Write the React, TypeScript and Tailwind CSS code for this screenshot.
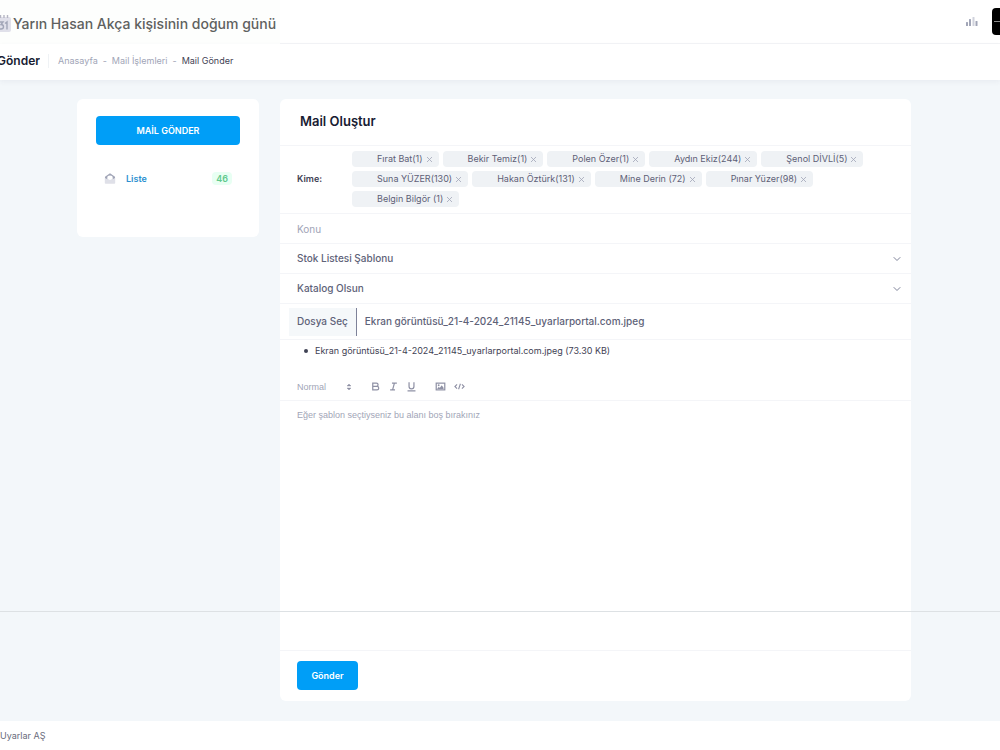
import { useState } from 'react';

const RECIPIENTS = [
  'Fırat Bat(1)',
  'Bekir Temiz(1)',
  'Polen Özer(1)',
  'Aydın Ekiz(244)',
  'Şenol DİVLİ(5)',
  'Suna YÜZER(130)',
  'Hakan Öztürk(131)',
  'Mine Derin (72)',
  'Pınar Yüzer(98)',
  'Belgin Bilgör (1)',
];

const FILE_NAME = 'Ekran görüntüsü_21-4-2024_21145_uyarlarportal.com.jpeg';

function CalendarIcon() {
  return (
    <svg className="-ml-1.5 h-5 w-[17px] shrink-0" viewBox="0 0 17 20" aria-hidden="true">
      <rect x="0" y="5" width="17" height="15" rx="2" fill="#e0e0ea" />
      <path d="M3 3v3M6.500 3v3M10 3v3M13.500 3v3" stroke="#b5b5c3" strokeWidth="1.400" />
      <path d="M5.500 10h3.500l-2 2.500q2.500 0 2.500 2.200T7 17H5.500M11 11.500L13 10v7.500" fill="none" stroke="#a1a5b7" strokeWidth="1.400" />
    </svg>
  );
}

function BarsIcon() {
  return (
    <svg className="h-3 w-3" viewBox="0 0 12 12" aria-hidden="true">
      <rect x="0" y="6" width="2" height="4" rx="0.500" fill="#a1a5b7" />
      <rect x="3" y="3" width="2" height="7" rx="0.500" fill="#a1a5b7" />
      <rect x="6.500" y="1" width="2" height="9" rx="0.500" fill="#d0d2dc" />
      <rect x="9.500" y="5" width="2" height="5" rx="0.500" fill="#a1a5b7" />
    </svg>
  );
}

function MailIcon() {
  return (
    <svg className="h-3 w-3" viewBox="0 0 12 12" aria-hidden="true">
      <path d="M.8 5.500L6 8l5.200-2.500V11a.8.8 0 0 1-.8.8H1.600A.8.8 0 0 1 .8 11z" fill="#dfe0e8" />
      <path d="M1 6V4.800L6 1.300l5 3.500V6L8.700 7.200V5.700a2.700 2.200 0 0 0-5.400 0v1.500z" fill="#a1a5b7" />
    </svg>
  );
}

function Header() {
  return (
    <header className="flex h-11 items-center justify-between border-b border-[#f3f4f6] bg-white">
      <div className="flex h-12 items-center gap-0.5 bg-[#fdfefd] pr-1">
        <CalendarIcon />
        <span className="pt-1 text-sm font-medium text-[#5f615f]">
          Yarın Hasan Akça kişisinin doğum günü
        </span>
      </div>
      <div className="flex items-center gap-3.5">
        <button aria-label="İstatistikler">
          <BarsIcon />
        </button>
        <button
          aria-label="Profil"
          className="flex h-[27px] w-2 items-center rounded-l bg-black pl-0.5"
        >
          <span className="h-px w-full bg-[#8c8c8c]" />
        </button>
      </div>
    </header>
  );
}

function Toolbar() {
  return (
    <div className="flex h-9 items-center bg-white pb-0.5 text-[9px] shadow-[0_2px_5px_rgba(60,70,110,0.06)]">
      <h1 className="flex w-10 justify-end overflow-hidden text-xs font-semibold text-[#181c32]">
        Gönder
      </h1>
      <span className="mr-[9px] ml-2 h-3.5 w-px bg-[#eff2f5]" />
      <nav className="flex gap-[5px] text-[#a1a5b7]">
        <a href="#anasayfa">Anasayfa</a>
        <span>-</span>
        <a href="#mail">Mail İşlemleri</a>
        <span>-</span>
        <span className="text-[#3f4254]">Mail Gönder</span>
      </nav>
    </div>
  );
}

function Sidebar() {
  return (
    <aside className="h-[138px] w-[182px] shrink-0 rounded-md bg-white px-[19px] pt-[17px]">
      <button className="h-[29px] w-full rounded bg-[#009ef7] text-[9px] font-semibold text-white">
        MAİL GÖNDER
      </button>
      <a href="#liste" className="mt-6 flex h-[18px] items-center px-2 text-[9px] font-semibold">
        <MailIcon />
        <span className="ml-2.5 text-[#2b8fd0]">Liste</span>
        <span className="ml-auto rounded bg-[#e8fff3] px-1 text-[#62c98d]">46</span>
      </a>
    </aside>
  );
}

function Chip({ name, onRemove }: { name: string; onRemove: () => void }) {
  return (
    <span className="flex h-4 items-center gap-1 rounded bg-[#eff2f5] pr-[7px] pl-[25px] text-[9px] text-[#5e5f77]">
      {name}
      <button aria-label={`${name} kaldır`} onClick={onRemove}>
        <svg className="h-[5px] w-[5px]" viewBox="0 0 5 5" aria-hidden="true">
          <path d="M0 0l5 5M5 0L0 5" stroke="#a1a5b7" strokeWidth="0.800" />
        </svg>
      </button>
    </span>
  );
}

function SelectRow({ label, options }: { label: string; options: string[] }) {
  return (
    <div className="relative border-b border-[#f4f5f8]">
      <select
        aria-label={label}
        className="block h-[29px] w-full appearance-none bg-transparent px-[17px] text-[10px] font-medium text-[#5e6278]"
      >
        {options.map((o) => (
          <option key={o}>{o}</option>
        ))}
      </select>
      <svg
        className="pointer-events-none absolute top-[11px] right-2.5 h-2 w-2"
        viewBox="0 0 8 8"
        aria-hidden="true"
      >
        <path d="M1 2.500l3 3 3-3" fill="none" stroke="#7e8299" strokeLinecap="round" />
      </svg>
    </div>
  );
}

function EditorToolbar() {
  return (
    <div className="flex h-7 items-center border-b border-[#f4f5f8] px-[17px] text-[#8f91a5]">
      <div className="relative mr-[18px] flex w-[55px] items-center">
        <select
          aria-label="Biçim"
          className="h-4 w-full appearance-none bg-transparent font-['Liberation_Sans',sans-serif] text-[9px] leading-4 text-[#a1a5b7]"
        >
          <option>Normal</option>
        </select>
        <svg
          className="pointer-events-none absolute top-1 right-0 h-2 w-1.5"
          viewBox="0 0 6 8"
          aria-hidden="true"
        >
          <path d="M1 3l2-2 2 2zM1 5l2 2 2-2z" fill="#8d90a3" stroke="#8d90a3" strokeWidth="0.400" />
        </svg>
      </div>
      <div className="flex gap-[7px]">
        <button aria-label="Kalın">
          <svg className="h-[11px] w-[11px]" viewBox="0 0 18 18" fill="none" stroke="currentColor" strokeWidth="2" aria-hidden="true">
            <path d="M4.500 3.500h6a2.700 2.700 0 0 1 0 5.400h-6zM4.500 8.900h7a2.800 2.800 0 0 1 0 5.600h-7z" />
          </svg>
        </button>
        <button aria-label="İtalik">
          <svg className="h-[11px] w-[11px]" viewBox="0 0 18 18" fill="none" stroke="currentColor" strokeWidth="2" aria-hidden="true">
            <path d="M6.500 3.500h8M3.500 14.500h8M7.500 14.500l3-11" />
          </svg>
        </button>
        <button aria-label="Altı çizili">
          <svg className="h-[11px] w-[11px]" viewBox="0 0 18 18" fill="none" stroke="currentColor" strokeWidth="2" aria-hidden="true">
            <path d="M5 2v7a4 4 0 0 0 8 0V2M2.500 16h13" />
          </svg>
        </button>
      </div>
      <div className="ml-[18px] flex gap-2">
        <button aria-label="Resim">
          <svg className="h-[11px] w-[11px]" viewBox="0 0 18 18" aria-hidden="true">
            <rect x="2" y="3.500" width="14" height="11" fill="none" stroke="currentColor" strokeWidth="2" />
            <circle cx="6" cy="7" r="1.500" fill="currentColor" />
            <path d="M4 13v-1l2-2 2 1 3-4 3 4v2z" fill="currentColor" />
          </svg>
        </button>
        <button aria-label="Kod">
          <svg className="h-[11px] w-[11px]" viewBox="0 0 18 18" fill="none" stroke="currentColor" strokeWidth="1.800" aria-hidden="true">
            <path d="M5 5.500L1.500 9 5 12.500M13 5.500L16.500 9 13 12.500M10.500 4.500l-3 9" />
          </svg>
        </button>
      </div>
    </div>
  );
}

function ComposeCard() {
  const [recipients, setRecipients] = useState(RECIPIENTS);

  return (
    <form className="min-w-0 flex-1 rounded-md bg-white" onSubmit={(e) => e.preventDefault()}>
      <div className="flex h-[47px] items-center border-b border-[#f4f5f8] px-5">
        <h2 className="text-[13px] font-semibold text-[#181c32]">Mail Oluştur</h2>
      </div>

      {/* Recipients */}
      <div className="flex items-center border-b border-[#f4f5f8] pt-[5px] pr-8 pb-1.5 pl-[17px]">
        <span className="w-[55px] shrink-0 text-[9px] font-semibold text-[#3f4254]">Kime:</span>
        <div className="flex flex-wrap gap-1">
          {recipients.map((name) => (
            <Chip
              key={name}
              name={name}
              onRemove={() => setRecipients(recipients.filter((r) => r !== name))}
            />
          ))}
        </div>
      </div>

      <input
        type="text"
        aria-label="Konu"
        placeholder="Konu"
        className="block h-[30px] w-full border-b border-[#f4f5f8] px-[17px] text-[10px] placeholder:text-[#a1a5b7]"
      />
      <SelectRow label="Şablon" options={['Stok Listesi Şablonu']} />
      <SelectRow label="Katalog" options={['Katalog Olsun']} />

      {/* File picker */}
      <div className="flex h-9 items-center border-b border-[#f4f5f8] pl-[9px] text-[10px] font-medium text-[#5e6278]">
        <label
          htmlFor="attachment"
          className="flex h-7 items-center border-r border-[#7e8299] bg-[#f5f8fa] px-2"
        >
          Dosya Seç
        </label>
        <input id="attachment" type="file" className="sr-only" />
        <span className="pl-2">{FILE_NAME}</span>
      </div>
      <ul className="h-[33px] pt-1 pl-6 text-[9px] text-[#3f4254]">
        <li className="flex items-center gap-[7px] before:h-1 before:w-1 before:rounded-full before:bg-[#3f4254]">
          {FILE_NAME} (73.30 KB)
        </li>
      </ul>

      <EditorToolbar />
      <textarea
        aria-label="Mesaj"
        placeholder="Eğer şablon seçtiyseniz bu alanı boş bırakınız"
        className="block h-[249px] w-full resize-none px-[17px] py-2 font-['Liberation_Sans',sans-serif] text-[9px] placeholder:text-[#a1a5b7]"
      />
      <div className="border-t border-[#f4f5f8] px-[17px] pt-2.5 pb-[11px]">
        <button className="block h-[29px] w-[61px] rounded bg-[#009ef7] text-[9px] font-semibold text-white">
          Gönder
        </button>
      </div>
    </form>
  );
}

export default function App() {
  return (
    <div className="relative flex min-h-screen flex-col overflow-hidden bg-[#f3f7fa] font-['Inter',sans-serif]">
      <Header />
      <Toolbar />
      <main className="flex flex-1 items-start gap-[21px] pt-[19px] pr-[89px] pb-5 pl-[77px]">
        <Sidebar />
        <ComposeCard />
      </main>
      <footer className="flex h-[29px] items-center bg-white text-[9px] text-[#6a6c7c]">
        Uyarlar AŞ
      </footer>
      {/* Thin rule that lies across the page above the footer */}
      <div className="pointer-events-none absolute inset-x-0 bottom-[138px] h-px bg-[#dde1e4]" />
    </div>
  );
}
